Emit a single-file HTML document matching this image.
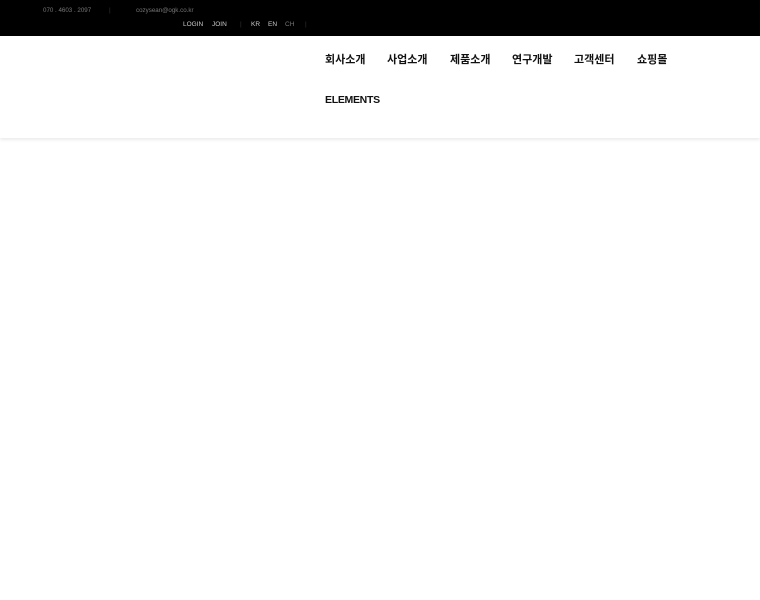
<!DOCTYPE html>
<html><head><meta charset="utf-8"><style>
*{margin:0;padding:0;box-sizing:border-box}
body{width:760px;height:600px;background:#fff;font-family:"Liberation Sans","Noto Sans CJK KR",sans-serif;position:relative;overflow:hidden}
.top{position:absolute;left:0;top:0;width:760px;height:36px;background:#000}
.t{position:absolute;color:#777;font-size:6.5px;letter-spacing:0}
.w{color:#ccc}
.nav{position:absolute;left:0;top:36px;width:760px;height:102px;background:#fff;box-shadow:0 2px 3px rgba(0,0,0,.08)}
.m{position:absolute;font-weight:bold;font-size:11px;color:#111}
</style></head><body>
<div class="top">
<span class="t" style="left:43px;top:7px;font-size:6.2px">070 . 4603 . 2097</span>
<span class="t" style="left:109px;top:7px;color:#333">|</span>
<span class="t" style="left:136px;top:7px;font-size:6.2px">cozysean@ogk.co.kr</span>
<span class="t w" style="left:183px;top:21px">LOGIN</span>
<span class="t w" style="left:212px;top:21px">JOIN</span>
<span class="t" style="left:240px;top:21px;color:#333">|</span>
<span class="t w" style="left:251px;top:21px">KR</span>
<span class="t w" style="left:268px;top:21px">EN</span>
<span class="t" style="left:285px;top:21px">CH</span>
<span class="t" style="left:305px;top:21px;color:#333">|</span>
</div>
<div class="nav">
<span class="m" style="left:325px;top:15px">회사소개</span>
<span class="m" style="left:387px;top:15px">사업소개</span>
<span class="m" style="left:450px;top:15px">제품소개</span>
<span class="m" style="left:512px;top:15px">연구개발</span>
<span class="m" style="left:574px;top:15px">고객센터</span>
<span class="m" style="left:637px;top:15px">쇼핑몰</span>
<span class="m" style="left:325px;top:58px;font-size:10.5px;letter-spacing:-0.3px">ELEMENTS</span>
</div>
</body></html>
